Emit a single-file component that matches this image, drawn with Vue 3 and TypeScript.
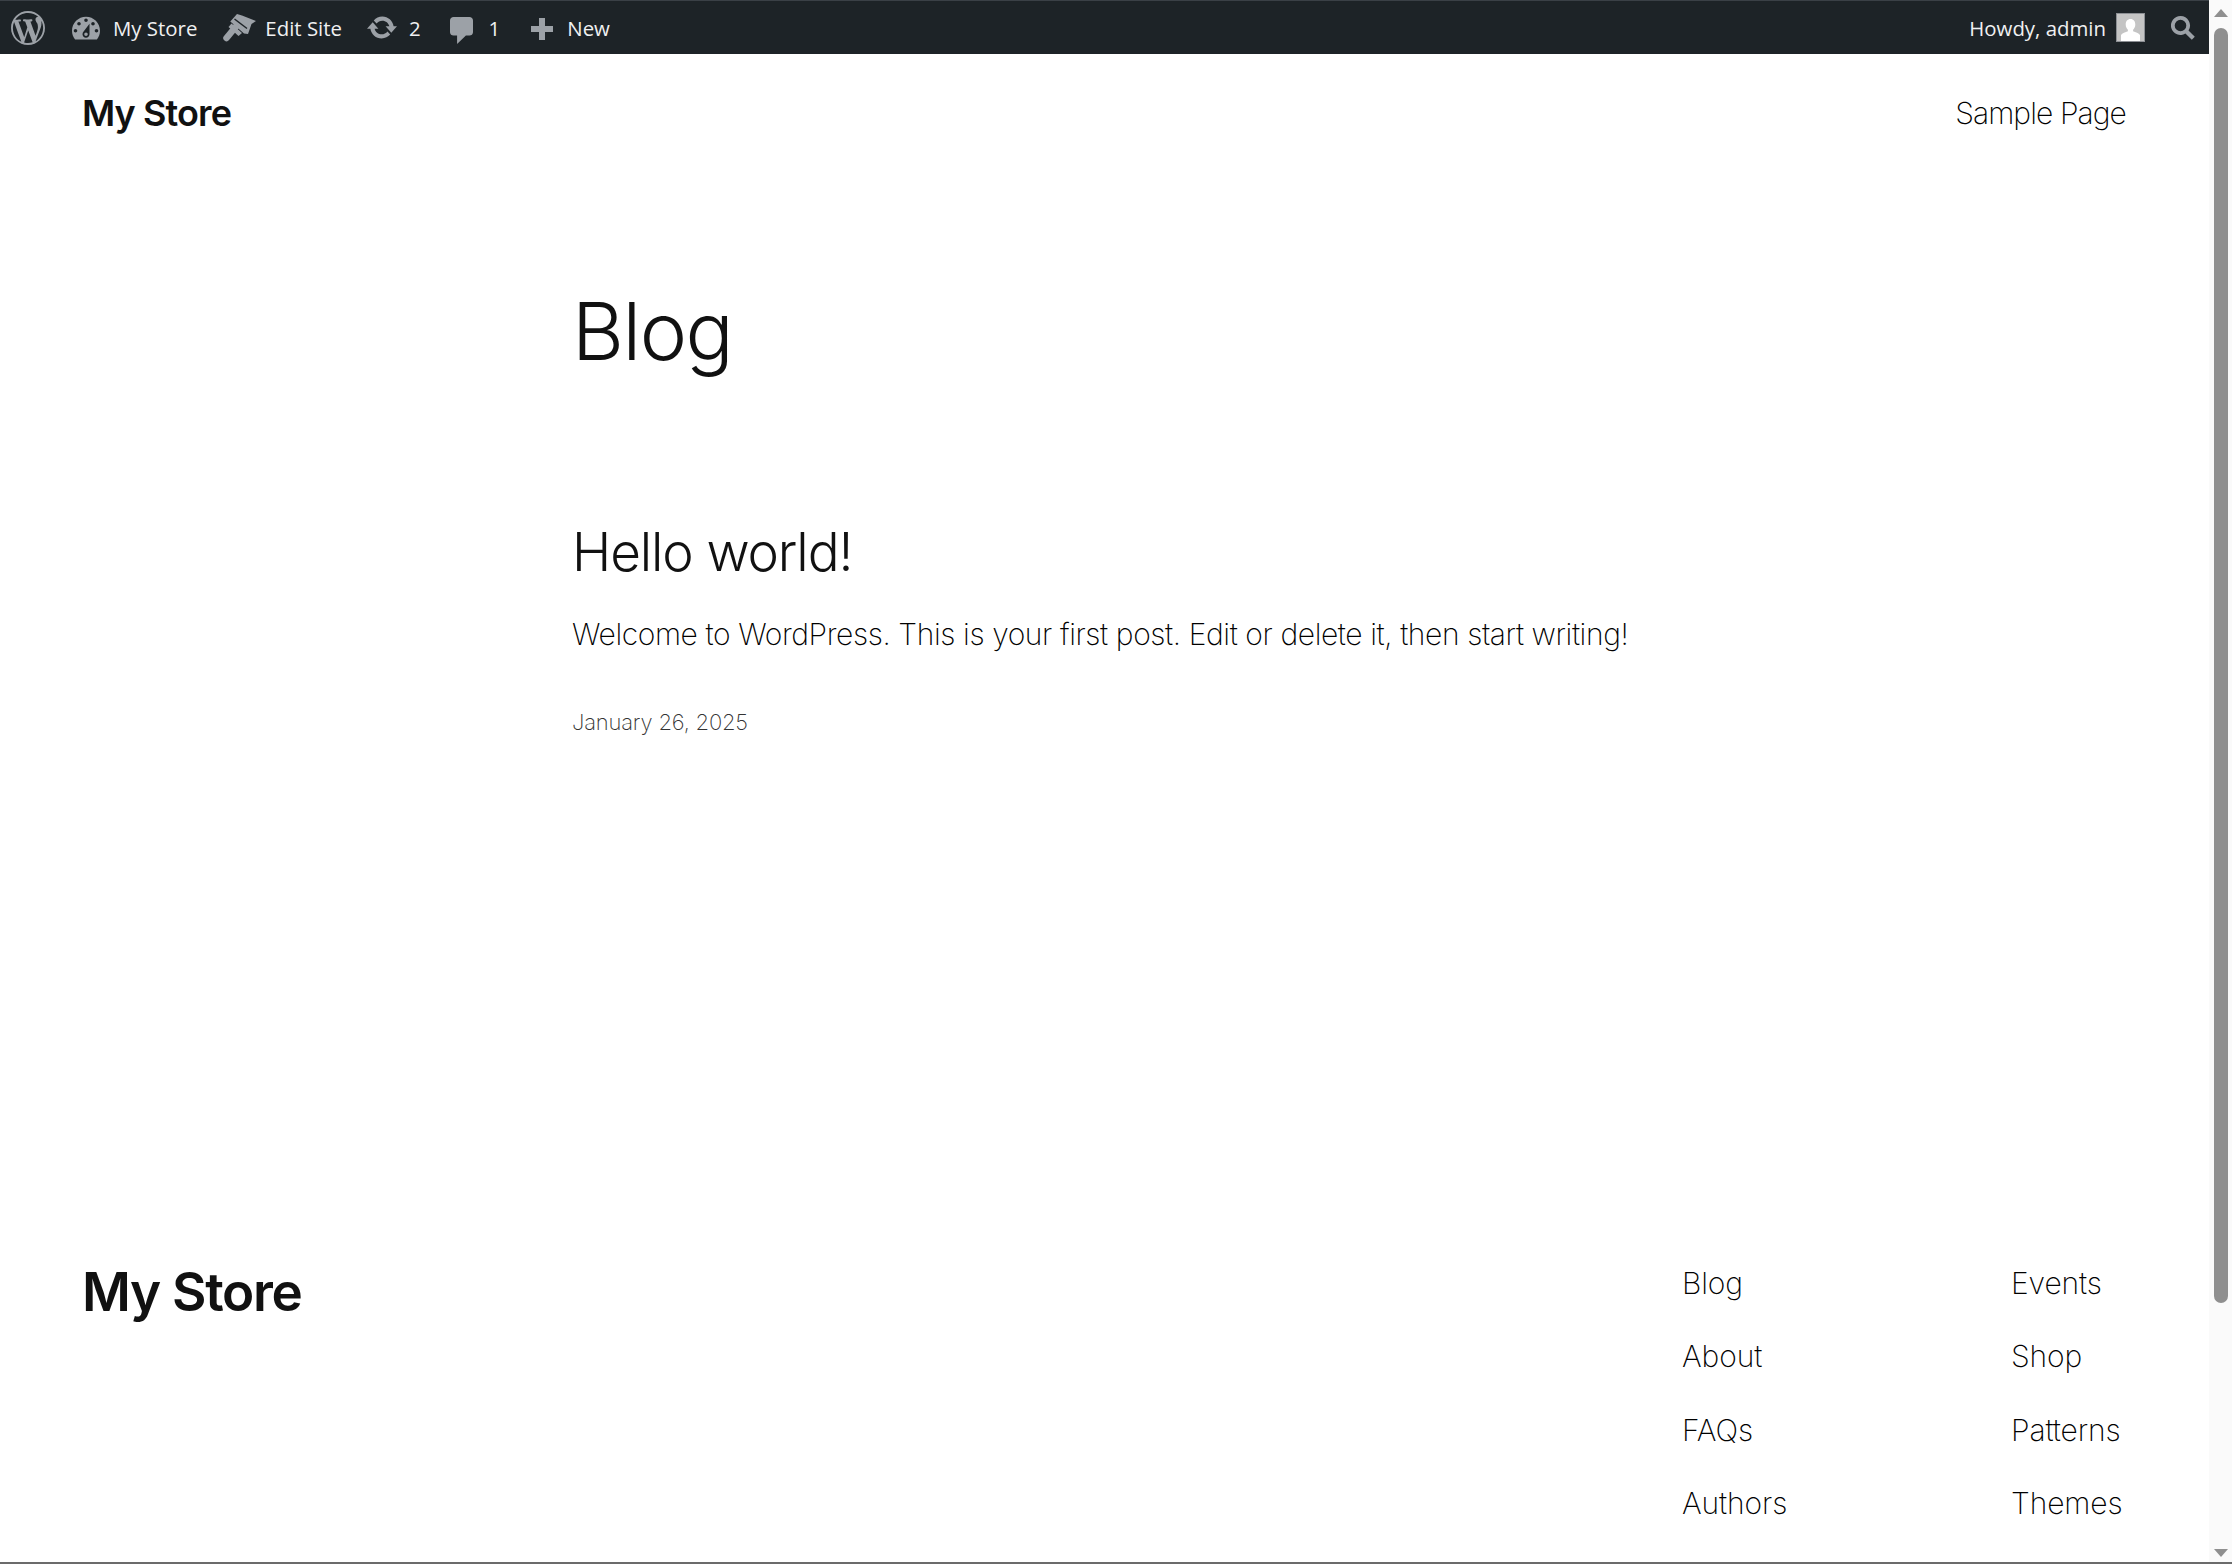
<script setup lang="ts">
const col1: string[] = ['Blog', 'About', 'FAQs', 'Authors']
const col2: string[] = ['Events', 'Shop', 'Patterns', 'Themes']
</script>

<template>
  <div class="window">
    <div class="page">
      <div class="adminbar">
        <div class="bar-left">
          <svg class="ic wp" viewBox="0 0 20 20"><path d="M20 10c0-5.51-4.49-10-10-10C4.48 0 0 4.49 0 10c0 5.52 4.48 10 10 10 5.51 0 10-4.48 10-10zM7.78 15.37L4.37 6.22c.55-.02 1.17-.08 1.17-.08.5-.06.44-1.13-.06-1.11 0 0-1.45.11-2.37.11-.18 0-.37 0-.58-.01C4.12 2.69 6.87 1.11 10 1.11c2.33 0 4.45.87 6.05 2.34-.68-.11-1.65.39-1.65 1.58 0 .74.45 1.36.9 2.1.35.61.55 1.36.55 2.46 0 1.49-1.4 5-1.4 5l-3.03-8.37c.54-.02.82-.17.82-.17.5-.05.44-1.25-.06-1.22 0 0-1.44.12-2.38.12-.87 0-2.33-.12-2.33-.12-.5-.03-.56 1.2-.06 1.22l.92.08 1.26 3.41zM17.41 10c.24-.64.74-1.87.43-4.25.7 1.29 1.05 2.71 1.05 4.25 0 3.29-1.73 6.24-4.4 7.78.97-2.59 1.94-5.2 2.92-7.78zM6.1 18.09C3.12 16.65 1.11 13.53 1.11 10c0-1.3.23-2.48.72-3.59C3.25 10.3 4.67 14.2 6.1 18.09zm4.03-6.63l2.58 6.98c-.86.29-1.76.45-2.71.45-.79 0-1.57-.11-2.29-.33.81-2.38 1.62-4.74 2.42-7.1z"/></svg>
          <svg class="ic dash" viewBox="2 3 16 13"><path fill-rule="evenodd" d="M3.76 16h12.48c1.1-1.37 1.76-3.11 1.76-5 0-4.42-3.58-8-8-8s-8 3.58-8 8c0 1.89.66 3.63 1.76 5zM10 4c.55 0 1 .45 1 1s-.45 1-1 1-1-.45-1-1 .45-1 1-1zM6 6c.55 0 1 .45 1 1s-.45 1-1 1-1-.45-1-1 .45-1 1-1zm8 0c.55 0 1 .45 1 1s-.45 1-1 1-1-.45-1-1 .45-1 1-1zm-5.37 5.55L12 7v6c0 1.1-.9 2-2 2s-2-.9-2-2c0-.57.24-1.08.63-1.45zM4 10c.55 0 1 .45 1 1s-.45 1-1 1-1-.45-1-1 .45-1 1-1zm12 0c.55 0 1 .45 1 1s-.45 1-1 1-1-.45-1-1 .45-1 1-1zm-5 3c0-.55-.45-1-1-1s-1 .45-1 1 .45 1 1 1 1-.45 1-1z"/></svg>
          <span class="t t-store">My Store</span>
          <svg class="ic brush" viewBox="0 0 33 29"><path d="M14 1 19 2.5 33 8 28.5 11 25 21 21 20.5 7.3 8.5z"/><path class="brush-line" d="M11.5 6 24 15.5"/><path class="brush-handle" d="M13 13.5 3.5 25"/><path d="M8.5 10.5 19 20l-3.5 3-10-9z"/></svg>
          <span class="t t-edit">Edit Site</span>
          <svg class="ic upd" viewBox="0.8 3 18.4 14"><path d="M10.2 3.28c3.53 0 6.43 2.61 6.92 6h2.08l-3.5 4-3.5-4h2.32c-.45-1.97-2.21-3.45-4.32-3.45-1.45 0-2.73.71-3.54 1.78L4.95 5.66C6.23 4.2 8.11 3.28 10.2 3.28zm-.4 13.44c-3.52 0-6.43-2.61-6.92-6H.8l3.5-4c1.17 1.33 2.33 2.67 3.5 4H5.48c.45 1.97 2.21 3.45 4.32 3.45 1.45 0 2.73-.71 3.54-1.78l1.71 1.95c-1.28 1.46-3.15 2.38-5.25 2.38z"/></svg>
          <span class="t t-two">2</span>
          <svg class="ic com" viewBox="3 2 13 16" preserveAspectRatio="none"><path d="M5 2h9c1.1 0 2 .9 2 2v7c0 1.1-.9 2-2 2h-2l-5 5v-5H5c-1.1 0-2-.9-2-2V4c0-1.1.9-2 2-2z"/></svg>
          <span class="t t-one">1</span>
          <svg class="ic plus" viewBox="0 0 22 22"><path d="M8 0h6v8h8v6h-8v8H8v-8H0V8h8z"/></svg>
          <span class="t t-new">New</span>
        </div>
        <div class="bar-right">
          <span class="t">Howdy, admin</span>
          <div class="avatar">
            <svg viewBox="0 0 27 27"><path fill="#fff" d="M13.5 5c3 0 4.8 2.4 4.8 5.4 0 2.3-1 4.2-2.2 5.3v1.5c2.4.8 5.8 2 6.9 3.8V27H4v-6c1.1-1.8 4.500-3 6.900-3.800v-1.500C9.700 14.600 8.700 12.700 8.700 10.400 8.700 7.400 10.500 5 13.500 5z"/></svg>
          </div>
          <svg class="ic search" viewBox="0 0 24 24"><path fill-rule="evenodd" d="M9.500 0a9.500 9.500 0 0 1 8 14.600l6.300 6.100-3 3.100-6.400-6.200A9.500 9.500 0 1 1 9.500 0zm0 3.700a5.800 5.800 0 1 0 0 11.600 5.800 5.800 0 0 0 0-11.600z"/></svg>
        </div>
      </div>

      <header class="site-header">
        <div class="site-title">My Store</div>
        <nav class="top-nav">Sample Page</nav>
      </header>

      <main class="content">
        <h1>Blog</h1>
        <h2>Hello world!</h2>
        <p class="excerpt">Welcome to WordPress. This is your first post. Edit or delete it, then start writing!</p>
        <div class="date">January 26, 2025</div>
      </main>

      <footer class="site-footer">
        <div class="footer-title">My Store</div>
        <div class="footer-links">
          <ul class="col-a">
            <li v-for="l in col1" :key="l">{{ l }}</li>
          </ul>
          <ul class="col-b">
            <li v-for="l in col2" :key="l">{{ l }}</li>
          </ul>
        </div>
      </footer>
    </div>

    <div class="scrollbar">
      <div class="arrow up"></div>
      <div class="thumb"></div>
      <div class="arrow down"></div>
    </div>
  </div>
</template>

<style>
html, body { margin: 0; overflow: hidden; background: #fff; }
</style>

<style scoped>
.window {
  width: 2232px;
  height: 1564px;
  display: flex;
  box-sizing: border-box;
  border-bottom: 2px solid #6b6b6b;
  overflow: hidden;
  font-family: Inter, "Liberation Sans", sans-serif;
  color: #111;
  background: #fff;
}
.page { width: 2209px; flex: none; display: flex; flex-direction: column; }

.adminbar {
  height: 54px;
  flex: none;
  box-sizing: border-box;
  border-top: 1px solid #3a4046;
  background: #1d2327;
  display: flex;
  justify-content: space-between;
  align-items: center;
  font-family: "Open Sans", "Noto Sans", sans-serif;
  font-size: 20.4px;
  color: #f0f0f1;
}
.bar-left { display: flex; align-items: center; padding-left: 11px; }
.bar-right { display: flex; align-items: center; padding-right: 14px; }
.ic { fill: #9ca1a7; flex: none; display: block; }
.t { white-space: nowrap; line-height: 27px; padding-top: 1px; }
.wp { width: 34px; height: 34px; }
.dash { width: 28px; height: 24px; margin-left: 27px; }
.t-store { margin-left: 13px; }
.brush { width: 33px; height: 29px; margin-left: 26px; }
.brush-line { fill: none; stroke: #1d2327; stroke-width: 1.5; }
.brush-handle { fill: none; stroke: #9ca1a7; stroke-width: 6.5; stroke-linecap: round; }
.t-edit { margin-left: 9px; }
.upd { width: 30px; height: 23px; margin-left: 25px; }
.t-two { margin-left: 12px; }
.com { width: 23px; height: 27px; margin-left: 29px; margin-top: 5px; }
.t-one { margin-left: 16px; }
.plus { width: 22px; height: 22px; margin-left: 31px; margin-top: 2px; }
.t-new { margin-left: 14px; }
.avatar { width: 29px; height: 29px; margin-left: 10px; box-sizing: border-box; border: 1px solid #8c8f94; background: #c4c4c4; overflow: hidden; }
.avatar svg { display: block; width: 100%; height: 100%; }
.search { width: 24px; height: 24px; margin-left: 26px; }

.site-header {
  display: flex;
  justify-content: space-between;
  align-items: center;
  padding: 0 83px 0 82px;
  height: 118px;
  flex: none;
}
.site-title { font-size: 36px; font-weight: 600; letter-spacing: -0.9px; }
.top-nav { font-size: 30px; font-weight: 200; letter-spacing: -0.9px; color: #000; }

.content { flex: 1; padding-left: 572px; }
h1 { margin: 0; padding-top: 114px; font-size: 80px; line-height: 90px; font-weight: 300; letter-spacing: -1.5px; }
h2 { margin: 0; padding-top: 144px; font-size: 53px; line-height: 64px; font-weight: 300; letter-spacing: -1.1px; }
.excerpt { margin: 0; padding-top: 30px; font-size: 30px; line-height: 40px; font-weight: 200; letter-spacing: -0.4px; color: #000; }
.date { padding-top: 53px; font-size: 22px; line-height: 30px; font-weight: 200; color: #333; letter-spacing: -0.2px; }

.site-footer {
  flex: none;
  height: 302px;
  display: flex;
  justify-content: space-between;
  padding: 0 83px 0 82px;
}
.footer-title { font-size: 53px; font-weight: 600; letter-spacing: -1.3px; line-height: 64px; }
.footer-links { display: flex; padding-top: 3px; }
ul { list-style: none; margin: 0; padding: 0; font-size: 30px; font-weight: 200; letter-spacing: -0.1px; color: #000; }
li { line-height: 40px; margin-bottom: 33.4px; white-space: nowrap; }
.col-a { width: 329px; }
.col-b { width: 115px; }

.scrollbar {
  flex: 1;
  background: #fafafa;
  display: flex;
  flex-direction: column;
  align-items: center;
  padding: 9px 0 5px;
  box-sizing: border-box;
}
.arrow { width: 0; height: 0; border-left: 7.5px solid transparent; border-right: 7.5px solid transparent; }
.up { border-bottom: 8px solid #8f8f8f; }
.down { border-top: 8px solid #8f8f8f; }
.thumb { width: 14px; height: 1275px; margin-top: 11px; margin-bottom: auto; background: #8f8f8f; border-radius: 7px; }
</style>
